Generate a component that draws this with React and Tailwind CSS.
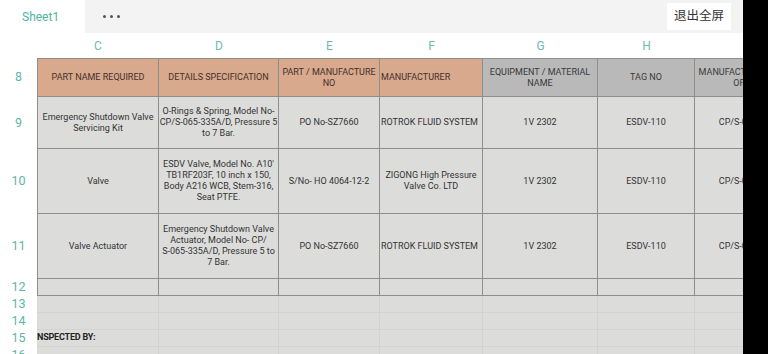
import React from "react";

const COLS = [122, 120, 101, 103, 115, 97, 120];
const LETTERS = ["C", "D", "E", "F", "G", "H", "I"];

const headers = [
  { t: "PART NAME REQUIRED", s: true },
  { t: "DETAILS SPECIFICATION", s: true },
  { t: "PART / MANUFACTURE NO", s: true },
  { t: "MANUFACTURER", s: true, left: true },
  { t: "EQUIPMENT / MATERIAL NAME", s: false },
  { t: "TAG NO", s: false },
  { t: "MANUFACTURER COUNTRY OF ORIGIN", s: false },
];

const rows = [
  {
    n: "9",
    h: 52,
    cells: [
      ["Emergency Shutdown Valve", "Servicing Kit"],
      ["O-Rings & Spring, Model No-", "CP/S-065-335A/D, Pressure 5", "to 7 Bar."],
      ["PO No-SZ7660"],
      ["ROTROK FLUID SYSTEM"],
      ["1V 2302"],
      ["ESDV-110"],
      ["CP/S-065-335A/D"],
    ],
  },
  {
    n: "10",
    h: 65,
    cells: [
      ["Valve"],
      ["ESDV Valve, Model No. A10'", "TB1RF203F, 10 inch x 150,", "Body A216 WCB, Stem-316,", "Seat PTFE."],
      ["S/No- HO 4064-12-2"],
      ["ZIGONG High Pressure", "Valve Co. LTD"],
      ["1V 2302"],
      ["ESDV-110"],
      ["CP/S-065-335A/D"],
    ],
  },
  {
    n: "11",
    h: 65,
    cells: [
      ["Valve Actuator"],
      ["Emergency Shutdown Valve", "Actuator, Model No-  CP/", "S-065-335A/D, Pressure 5 to", "7 Bar."],
      ["PO No-SZ7660"],
      ["ROTROK FLUID SYSTEM"],
      ["1V 2302"],
      ["ESDV-110"],
      ["CP/S-065-335A/D"],
    ],
  },
];

function RowNum({ n, h }) {
  return (
    <div
      className="w-[37px] shrink-0 bg-white flex items-center justify-center text-[12.5px] text-[#5db6a6]"
      style={{ height: h }}
    >
      {n}
    </div>
  );
}

export default function App() {
  return (
    <div
      className="w-[768px] h-[354px] overflow-hidden flex bg-black"
      style={{ fontFamily: "Roboto, 'Noto Sans CJK SC', sans-serif" }}
    >
      <div className="w-[743px] h-full overflow-hidden bg-[#dcdddb] flex flex-col">
        {/* top bar */}
        <div className="h-[33px] shrink-0 bg-[#f3f3f3] flex items-center">
          <div className="w-[85px] h-full bg-white flex items-center pl-[22px] text-[12px] text-[#4fb5a1]">
            Sheet1
          </div>
          <div className="ml-[18px] flex items-center gap-[4px]">
            <span className="w-[3px] h-[3px] rounded-full bg-[#555]" />
            <span className="w-[3px] h-[3px] rounded-full bg-[#555]" />
            <span className="w-[3px] h-[3px] rounded-full bg-[#555]" />
          </div>
          <div className="ml-auto mr-[12px] h-[27px] w-[64px] bg-white flex items-center justify-center text-[12.5px] text-[#333]">
            退出全屏
          </div>
        </div>

        {/* column letters */}
        <div className="h-[25px] shrink-0 flex bg-white">
          <div className="w-[37px] shrink-0" />
          {LETTERS.map((l, i) => (
            <div
              key={l}
              className="shrink-0 flex items-center justify-center text-[12px] text-[#6cbcae]"
              style={{ width: COLS[i] }}
            >
              {l}
            </div>
          ))}
        </div>

        {/* header row 8 */}
        <div className="flex shrink-0">
          <RowNum n="8" h={39} />
          {headers.map((c, i) => (
            <div
              key={i}
              className={
                "shrink-0 h-[39px] border-t border-b border-r border-[#8e8e8e] flex items-center text-[9px] leading-[11px] overflow-hidden " +
                (i === 0 ? "border-l " : "") +
                (c.s ? "bg-[#d9a98d] text-[#44302a] " : "bg-[#b9b9b9] text-[#3a3a3a] ") +
                (c.left ? "justify-start pl-[1px]" : "justify-center text-center px-[2px]")
              }
              style={{ width: COLS[i] }}
            >
              <span className={i === 6 ? "whitespace-nowrap" : ""}>
                {i === 6 ? (
                  <>
                    MANUFACTURER COUNTRY
                    <br />
                    OF ORIGIN
                  </>
                ) : (
                  c.t
                )}
              </span>
            </div>
          ))}
        </div>

        {/* data rows */}
        {rows.map((r) => (
          <div key={r.n} className="flex shrink-0">
            <RowNum n={r.n} h={r.h} />
            {r.cells.map((c, i) => (
              <div
                key={i}
                className={
                  "shrink-0 border-b border-r border-[#8e8e8e] flex flex-col justify-center text-[9px] leading-[11px] text-[#333] overflow-hidden whitespace-nowrap " +
                  (i === 0 ? "border-l " : "") +
                  (i === 3 && r.n !== "10" ? "items-start pl-[1px]" : "items-center text-center")
                }
                style={{ width: COLS[i], height: r.h }}
              >
                {c.map((line, k) => (
                  <span key={k}>{line}</span>
                ))}
              </div>
            ))}
          </div>
        ))}

        {/* row 12 */}
        <div className="flex shrink-0">
          <RowNum n="12" h={17} />
          {COLS.map((w, i) => (
            <div
              key={i}
              className={
                "shrink-0 h-[17px] border-b border-r border-[#8e8e8e] " + (i === 0 ? "border-l" : "")
              }
              style={{ width: w }}
            />
          ))}
        </div>

        {/* rows 13-16 */}
        {["13", "14", "15", "16"].map((n) => (
          <div key={n} className="flex shrink-0">
            <RowNum n={n} h={17} />
            {COLS.map((w, i) => (
              <div
                key={i}
                className="shrink-0 h-[17px] border-b border-r border-[#d3d4d2] flex items-center overflow-visible"
                style={{ width: w }}
              >
                {n === "15" && i === 0 ? (
                  <span className="text-[9px] font-bold text-[#222] whitespace-nowrap tracking-[-0.2px]">
                    NSPECTED BY:
                  </span>
                ) : null}
              </div>
            ))}
          </div>
        ))}
      </div>
    </div>
  );
}
